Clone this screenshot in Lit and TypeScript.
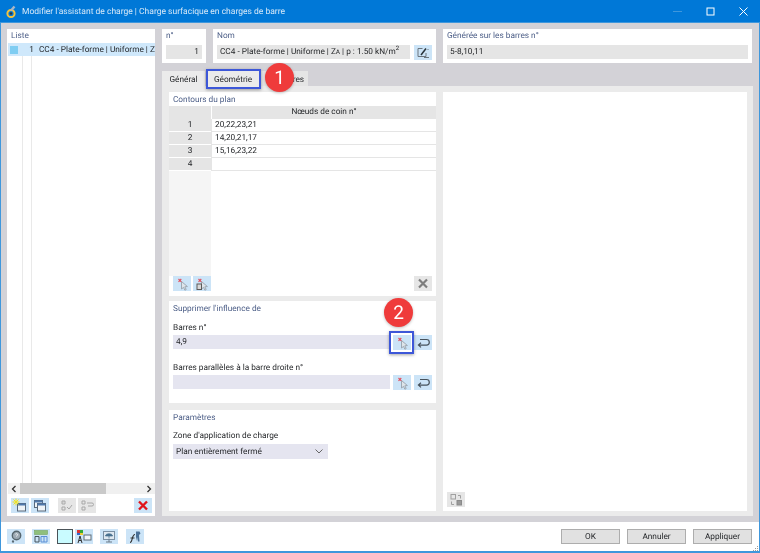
import { LitElement, html, css, svg } from 'lit'
import { customElement } from 'lit/decorators.js'

const pickX = svg`<path d="M7.500 5.500v7.500l2-1.600 1.400 2.800 1.300-.7-1.400-2.700 2.600-.3z" fill="#dfe5ea" stroke="#97a2ad" stroke-width=".9"/><path d="M4.500 3l2.800 2.800M7.300 3L4.500 5.800" stroke="#e0505e" stroke-width="1.100"/>`
const undo = svg`<path d="M5 4.500h6.500a2.800 2.800 0 0 1 0 5.600H3.500M6 7.800l-2.600 2.300L6 12.400" fill="none" stroke="#47525c" stroke-width="1.200"/>`

@customElement('icon-btn')
export class IconBtn extends LitElement {
    static styles = css`
        :host {
            display: flex;
            align-items: center;
            justify-content: center;
            width: 18px;
            height: 15px;
            background: #cce4f7;
            flex: none;
        }
        :host([grey]) {
            background: #e6e6e6;
        }
        ::slotted(svg) {
            width: 16px;
            height: 15px;
            display: block;
        }
    `

    render() {
        return html`<slot></slot>`
    }
}

@customElement('app-root')
export class AppRoot extends LitElement {
    static styles = css`
        :host {
            display: block;
            width: 760px;
            height: 553px;
            overflow: hidden;
            position: relative;
            font-family: Roboto, 'Noto Sans', sans-serif;
            font-size: 8.250px;
            color: #1f2124;
            background: #fff;
            filter: blur(0.3px);
            text-rendering: geometricPrecision;
        }
        .window {
            height: 553px;
            box-sizing: border-box;
            border: solid #3f97dc;
            border-width: 0 1px 2px 1px;
            display: flex;
            flex-direction: column;
        }
        .titlebar {
            height: 23px;
            margin: 0 -1px;
            box-sizing: border-box;
            border-bottom: 1px solid #3f97dc;
            padding-top: 1px;
            background: #0078d7;
            color: #d5e8f8;
            display: flex;
            align-items: center;
            flex: none;
            font-size: 8.500px;
        }
        .logo {
            width: 11px;
            height: 14px;
            margin: 0 5px 0 6px;
        }
        .title {
            flex: 1;
        }
        .winbtn {
            width: 33px;
            height: 21px;
            display: flex;
            align-items: center;
            justify-content: center;
        }
        .winbtn svg {
            width: 9px;
            height: 9px;
        }
        .body {
            flex: 1;
            background: #d3d2d7;
            padding: 6px;
            display: grid;
            grid-template-columns: 148px 1fr;
            column-gap: 7px;
            min-height: 0;
        }
        .panel {
            background: #fff;
        }
        .heading {
            color: #4b5d86;
            line-height: 12px;
        }
        .list {
            display: flex;
            flex-direction: column;
            padding-top: 1px;
            min-height: 0;
        }
        .list .heading {
            padding-left: 4px;
            height: 12px;
        }
        .listrow {
            height: 13px;
            box-sizing: border-box;
            padding-top: 1px;
            margin-top: 1px;
            background: #cfe8fb;
            display: flex;
            align-items: center;
            line-height: 12px;
            white-space: nowrap;
            overflow: hidden;
            margin-left: 1px;
        }
        .swatch {
            width: 8px;
            height: 8px;
            background: #7fcdf2;
            margin-left: 2px;
            flex: none;
        }
        .listnum {
            width: 10px;
            margin-left: 6px;
            text-align: right;
            flex: none;
        }
        .listtext {
            margin-left: 5px;
        }
        .listbody {
            flex: 1;
            display: flex;
            margin-left: 1px;
        }
        .listbody span {
            border-right: 1px solid #e9e9e9;
            width: 14px;
            flex: none;
        }
        .listbody span + span {
            width: 8px;
        }
        .scroll {
            height: 11px;
            background: #f0f0f0;
            display: flex;
            align-items: center;
            justify-content: space-between;
            margin-left: 1px;
            padding: 0 3px;
            position: relative;
        }
        .scroll svg {
            width: 6px;
            height: 8px;
            flex: none;
        }
        .thumb {
            position: absolute;
            left: 12px;
            width: 86px;
            height: 11px;
            background: #c9c9c9;
        }
        .listbar {
            display: flex;
            gap: 2px;
            padding: 4px 3px 3px 4px;
            align-items: center;
        }
        .listbar .sp {
            width: 5px;
        }
        .listbar .push {
            flex: 1;
        }
        .main {
            display: flex;
            flex-direction: column;
            min-height: 0;
        }
        .top {
            display: grid;
            grid-template-columns: 44px 223px 309px;
            column-gap: 7px;
            height: 34px;
        }
        .top .panel {
            padding: 1px 4px 0;
        }
        .top .field {
            margin-top: 3px;
        }
        .field {
            height: 14px;
            box-sizing: border-box;
            background: #e5e5e5;
            display: flex;
            align-items: center;
            padding: 1px 3px 0;
            line-height: 13px;
            white-space: nowrap;
        }
        .right {
            justify-content: flex-end;
        }
        .nomrow {
            display: flex;
            gap: 4px;
            margin-top: 3px;
        }
        .nomrow .field {
            flex: 1;
            margin: 0;
        }
        sup {
            font-size: 6px;
            line-height: 0;
        }
        small {
            font-size: 6.500px;
        }
        .tabs {
            display: flex;
            height: 15px;
            margin-top: 8px;
            flex: none;
        }
        .tab {
            line-height: 18px;
            background: #e5e5e5;
            border-right: 1px solid #d3d2d7;
            white-space: nowrap;
            text-align: center;
            overflow: hidden;
        }
        .tab.active {
            background: #ebebeb;
        }
        .tab.t1 {
            width: 43px;
        }
        .tab.t2 {
            width: 54px;
        }
        .tab.t3 {
            width: 47px;
        }
        .content {
            flex: 1;
            background: #ebebeb;
            padding: 6px 6px 5px 7px;
            display: grid;
            grid-template-columns: 267px 304px;
            column-gap: 7px;
            min-height: 0;
        }
        .col {
            display: flex;
            flex-direction: column;
            gap: 5px;
            min-height: 0;
        }
        .contours {
            height: 204px;
            display: flex;
            flex-direction: column;
            flex: none;
        }
        .contours .heading,
        .sect .heading {
            padding: 2px 4px 0;
            height: 12px;
            flex: none;
        }
        .grid {
            flex: 1;
            display: grid;
            grid-template-columns: 42px 1fr;
            grid-auto-rows: 13px;
            background: linear-gradient(90deg, #f5f5f5 42px, #fff 42px);
        }
        .grid .hd {
            background: #e5e5e5;
            text-align: center;
            line-height: 13px;
            border-left: 1px solid #fff;
        }
        .grid .hd.blank {
            border: 0;
        }
        .grid .num {
            background: #e5e5e5;
            text-align: center;
            line-height: 12px;
            border-bottom: 1px solid #fff;
        }
        .grid .val {
            background: #fff;
            padding-left: 3px;
            line-height: 12px;
            border-bottom: 1px solid #e5e5e5;
            border-left: 1px solid #e5e5e5;
        }
        .bar {
            display: flex;
            gap: 2px;
            height: 15px;
            padding: 0 4px 5px;
            flex: none;
        }
        .bar .push {
            flex: 1;
        }
        .sect {
            flex: none;
        }
        .sect .label {
            padding: 0 4px;
            line-height: 12px;
        }
        .sect .inrow {
            display: flex;
            gap: 3px;
            padding: 0 4px;
            margin-top: 1px;
        }
        .sect .inrow .field {
            flex: 1;
            background: #e5e5f0;
        }
        .sect.sup {
            height: 102px;
            margin-bottom: 2px;
        }
        .sect.par {
            flex: 1;
        }
        .gap6 {
            margin-top: 6px;
        }
        .gap7 {
            margin-top: 7px;
        }
        .gap12 {
            margin-top: 12px;
        }
        .select {
            width: 155px;
            height: 15px;
            margin: 2px 4px 0;
            box-sizing: border-box;
            background: #e5e5f0;
            display: flex;
            align-items: center;
            justify-content: space-between;
            padding: 0 5px 0 3px;
        }
        .select svg {
            width: 8px;
            height: 5px;
        }
        .rpanel {
            display: flex;
            align-items: flex-end;
            padding: 0 0 4px 4px;
        }
        .footer {
            height: 29px;
            flex: none;
            display: flex;
            align-items: center;
            padding: 0 7px 0 6px;
            gap: 7px;
            position: relative;
        }
        .footer .swatchbtn {
            width: 14px;
            height: 13px;
            background: #c9fbff;
            border: 1px solid #4a5358;
            margin-right: -5px;
        }
        .footer .last {
            margin-left: 1px;
        }
        .footer .push {
            flex: 1;
        }
        .btn {
            width: 57px;
            height: 13px;
            background: #e1e1e1;
            border: 1px solid #adadad;
            text-align: center;
            line-height: 15px;
        }
        .grip {
            position: absolute;
            right: 0;
            bottom: 0;
            width: 6px;
            height: 6px;
        }
        .badge {
            position: absolute;
            width: 29px;
            height: 29px;
            border-radius: 50%;
            background: #ef3b3b;
            color: #fff;
            font-size: 19px;
            line-height: 29px;
            text-align: center;
            box-shadow: 0 1px 3px rgba(0, 0, 0, 0.25);
        }
        .hl {
            position: absolute;
            box-sizing: border-box;
            border: 2px solid #3d57d8;
            box-shadow: 0 1px 3px rgba(0, 0, 0, 0.35);
        }
    `

    private icon(content: unknown, grey = false, cls = '') {
        return html`<icon-btn class=${cls} ?grey=${grey}><svg viewBox="0 0 16 15">${content}</svg></icon-btn>`
    }

    render() {
        const ic = (c: unknown, grey = false, cls = '') => this.icon(c, grey, cls)
        const win = svg`<rect x="5.500" y="5.500" width="8" height="7.500" fill="#eef3f7" stroke="#59687a"/><rect x="5.500" y="5.500" width="8" height="2" fill="#4f79ad"/>`
        return html`
            <div class="window">
                <div class="titlebar">
                    <svg class="logo" viewBox="0 0 11 14">
                        <circle cx="5" cy="8.500" r="3.600" fill="none" stroke="#f4c23c" stroke-width="2" />
                        <path d="M5 5.500L8.500 1.500" stroke="#a9b6c6" stroke-width="2.400" />
                        <circle cx="5" cy="8.500" r="1.200" fill="#333" />
                    </svg>
                    <div class="title">Modifier l'assistant de charge | Charge surfacique en charges de barre</div>
                    <div class="winbtn"><svg viewBox="0 0 9 9"><path d="M0 4.500h9" stroke="#3f97dc" /></svg></div>
                    <div class="winbtn"><svg viewBox="0 0 9 9"><rect x="1" y="1" width="7" height="7" fill="none" stroke="#fff" /></svg></div>
                    <div class="winbtn"><svg viewBox="0 0 9 9"><path d="M.5.5l8 8M8.500.5l-8 8" stroke="#fff" /></svg></div>
                </div>
                <div class="body">
                    <div class="panel list">
                        <div class="heading">Liste</div>
                        <div class="listrow">
                            <span class="swatch"></span><span class="listnum">1</span>
                            <span class="listtext">CC4 - Plate-forme | Uniforme | Z<small>A</small> | p : 1.50 kN/m<sup>2</sup></span>
                        </div>
                        <div class="listbody"><span></span><span></span></div>
                        <div class="scroll">
                            <svg viewBox="0 0 6 8"><path d="M4.500 1L1.500 4l3 3" fill="none" stroke="#333" stroke-width="1.300" /></svg>
                            <div class="thumb"></div>
                            <svg viewBox="0 0 6 8"><path d="M1.500 1l3 3-3 3" fill="none" stroke="#333" stroke-width="1.300" /></svg>
                        </div>
                        <div class="listbar">
                            ${ic(svg`${win}<path d="M1.500 1.500l5 5M6.500 1.500l-5 5M4 .5v7M.5 4h7" stroke="#f2e21e" stroke-width="1"/>`)}
                            ${ic(svg`<rect x="2.500" y="2.500" width="8" height="7" fill="#eef3f7" stroke="#59687a"/><rect x="2.500" y="2.500" width="8" height="2" fill="#4f79ad"/>${win}`)}
                            <span class="sp"></span>
                            ${ic(svg`<path d="M3 3h3v3H3zM3 9h3v3H3z" fill="none" stroke="#a8a8a8"/><path d="M8 9l2 2 3-4" fill="none" stroke="#a8a8a8"/><path d="M4 4.500l1-1" stroke="#a8a8a8"/>`, true)}
                            ${ic(svg`<path d="M3 3h3v3H3zM3 9h3v3H3z" fill="none" stroke="#a8a8a8"/><path d="M8 5h5a1.500 1.500 0 0 1 0 3H9" fill="none" stroke="#a8a8a8"/>`, true)}
                            <span class="push"></span>
                            ${ic(svg`<path d="M4 3.500l8 8M12 3.500l-8 8" stroke="#e0131a" stroke-width="2.400"/>`)}
                        </div>
                    </div>
                    <div class="main">
                        <div class="top">
                            <div class="panel">
                                <div class="heading">n°</div>
                                <div class="field right">1</div>
                            </div>
                            <div class="panel">
                                <div class="heading">Nom</div>
                                <div class="nomrow">
                                    <div class="field"><span>CC4 - Plate-forme | Uniforme | Z<small>A</small> | p : 1.50 kN/m<sup>2</sup></span></div>
                                    ${ic(svg`<path d="M7.500 3.500h-4.500v8h8V8" fill="none" stroke="#6b757e"/><path d="M6 10l5-6.500" stroke="#28323a" stroke-width="1.500"/><path d="M9 12.500h5M13 4v1" stroke="#6b757e"/>`)}
                                </div>
                            </div>
                            <div class="panel">
                                <div class="heading">Générée sur les barres n°</div>
                                <div class="field">5-8,10,11</div>
                            </div>
                        </div>
                        <div class="tabs">
                            <div class="tab t1 active">Général</div>
                            <div class="tab t2 active">Géométrie</div>
                            <div class="tab t3">Tributaires</div>
                        </div>
                        <div class="content">
                            <div class="col">
                                <div class="panel contours">
                                    <div class="heading">Contours du plan</div>
                                    <div class="grid">
                                        <div class="hd blank"></div>
                                        <div class="hd">Nœuds de coin n°</div>
                                        <div class="num">1</div>
                                        <div class="val">20,22,23,21</div>
                                        <div class="num">2</div>
                                        <div class="val">14,20,21,17</div>
                                        <div class="num">3</div>
                                        <div class="val">15,16,23,22</div>
                                        <div class="num">4</div>
                                        <div class="val"></div>
                                    </div>
                                    <div class="bar">
                                        ${ic(pickX)}
                                        ${ic(svg`${pickX}<rect x="3" y="8" width="4.500" height="5.500" fill="#d8d8d8" stroke="#5b5b5b"/>`)}
                                        <span class="push"></span>
                                        ${ic(svg`<path d="M4 3.500l8 8M12 3.500l-8 8" stroke="#7d7d7d" stroke-width="2.200"/>`, true)}
                                    </div>
                                </div>
                                <div class="panel sect sup">
                                    <div class="heading">Supprimer l'influence de</div>
                                    <div class="label gap7">Barres n°</div>
                                    <div class="inrow">
                                        <div class="field">4,9</div>
                                        ${ic(pickX)}
                                        ${ic(undo)}
                                    </div>
                                    <div class="label gap12">Barres parallèles à la barre droite n°</div>
                                    <div class="inrow">
                                        <div class="field"></div>
                                        ${ic(pickX)}
                                        ${ic(undo)}
                                    </div>
                                </div>
                                <div class="panel sect par">
                                    <div class="heading">Paramètres</div>
                                    <div class="label gap6">Zone d'application de charge</div>
                                    <div class="select">
                                        <span>Plan entièrement fermé</span>
                                        <svg viewBox="0 0 8 5"><path d="M.5.5L4 4 7.500.5" fill="none" stroke="#666" /></svg>
                                    </div>
                                </div>
                            </div>
                            <div class="panel rpanel">
                                ${ic(svg`<rect x="3" y="2.500" width="4.500" height="4.500" fill="none" stroke="#a0a0a0"/><rect x="9" y="8.500" width="4.500" height="4.500" fill="#999" stroke="#8a8a8a"/><path d="M10 3.500h2.500v3M6 12.500H3.500v-3" fill="none" stroke="#a0a0a0"/>`, true)}
                            </div>
                        </div>
                    </div>
                </div>
                <div class="footer">
                    ${ic(svg`<circle cx="8.500" cy="6.500" r="4.200" fill="#9eaab4" stroke="#56666f" stroke-width="1.400"/><path d="M5.500 11.500l-1 2" stroke="#56666f" stroke-width="1.800"/><path d="M7.300 5.300c.6-1 2.500-.7 2.300.5-.1.8-1.100.8-1.100 1.700" fill="none" stroke="#eef2f5"/>`)}
                    ${ic(svg`<rect x="1.500" y="1.500" width="13" height="4" fill="#8fbf7c" stroke="#75a562" stroke-width=".6"/><path d="M2 7.500h4v5.500H2z" fill="none" stroke="#45525c"/><path d="M8 7.500h6v5.500H8zM11 7.500v5.500" fill="none" stroke="#5a8fd6"/>`)}
                    <div class="swatchbtn"></div>
                    ${ic(svg`<rect x="1" y="1" width="3" height="3" fill="#d33"/><rect x="4" y="1" width="3" height="3" fill="#3a3"/><rect x="1" y="4" width="3" height="2" fill="#36c"/><rect x="4" y="4" width="3" height="2" fill="#ec3"/><path d="M2 14l2-7 2 7M3 11.500h2" fill="none" stroke="#333"/><rect x="8" y="6" width="7" height="5" fill="#f2f5f8" stroke="#5b6a78"/>`)}
                    ${ic(svg`<rect x="2.500" y="2.500" width="11" height="8" fill="#dfe8f0" stroke="#7a8fa3"/><path d="M5 13h6M8 10.500V13" stroke="#6b7a88"/><path d="M4.500 7c0-3 7-3 7 0zM8 7v2.500" fill="#47708f" stroke="#47708f" stroke-width=".7"/>`)}
                    ${ic(svg`<path d="M3 13.500c3 0 1.500-8 5-8" fill="none" stroke="#333" stroke-width="1.100"/><path d="M3.500 9h4" stroke="#333"/><path d="M9 2.500h3.500l1 2-1.500 1.500.5 6.500h-1.500L10 8l-1 4" fill="#4a6f96"/>`, false, 'last')}
                    <span class="push"></span>
                    <div class="btn">OK</div>
                    <div class="btn">Annuler</div>
                    <div class="btn">Appliquer</div>
                    <svg class="grip" viewBox="0 0 6 6"><path d="M4 5h1v1H4zM4 3h1v1H4zM4 1h1v1H4zM2 5h1v1H2zM2 3h1v1H2zM0 5h1v1H0z" fill="#9a9a9a" /></svg>
                </div>
            </div>
            <div class="hl" style="left:206px;top:69px;width:55px;height:20px"></div>
            <div class="badge" style="left:265px;top:63px">1</div>
            <div class="hl" style="left:389px;top:331px;width:25px;height:23px"></div>
            <div class="badge" style="left:384px;top:298px">2</div>
        `
    }
}
